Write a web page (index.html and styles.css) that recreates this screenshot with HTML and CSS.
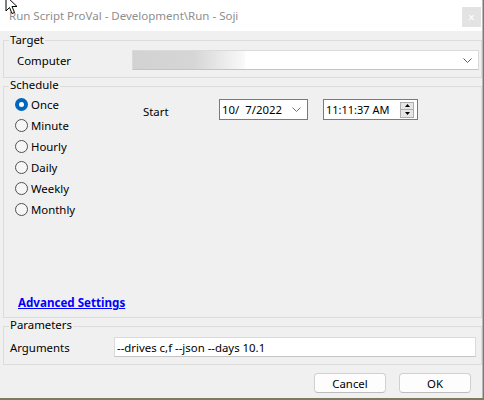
FILE: index.html
```html
<!DOCTYPE html>
<html>
<head>
<meta charset="utf-8">
<title>Run Script</title>
<link rel="stylesheet" href="styles.css">
</head>
<body>
<div class="window">
  <div class="titlebar">
    <span class="title">Run Script ProVal - Development\Run - Soji</span>
    <span class="close">×</span>
  </div>
  <div class="content">
    <fieldset class="group target">
      <legend>Target</legend>
      <div class="row">
        <span class="lbl">Computer</span>
        <div class="combo">
          <span class="redact"></span>
          <svg class="chev" width="9" height="5" viewBox="0 0 9 5"><polyline points="0.5,0.5 4.5,4.5 8.5,0.5" fill="none" stroke="#606060" stroke-width="1"/></svg>
        </div>
      </div>
    </fieldset>
    <fieldset class="group schedule">
      <legend>Schedule</legend>
      <div class="sched-body">
        <div class="sched-top">
          <div class="radios">
            <div class="radio"><span class="circle checked"></span>Once</div>
            <div class="radio"><span class="circle"></span>Minute</div>
            <div class="radio"><span class="circle"></span>Hourly</div>
            <div class="radio"><span class="circle"></span>Daily</div>
            <div class="radio"><span class="circle"></span>Weekly</div>
            <div class="radio"><span class="circle"></span>Monthly</div>
          </div>
          <div class="start">
            <span class="start-lbl">Start</span>
            <div class="date">
              <span class="val">10/  7/2022</span>
              <svg class="chev" width="9" height="5" viewBox="0 0 9 5"><polyline points="0.5,0.5 4.5,4.5 8.5,0.5" fill="none" stroke="#707070" stroke-width="1"/></svg>
            </div>
            <div class="time">
              <span class="val">11:11:37 AM</span>
              <div class="spin">
                <span class="spin-btn"><svg width="5" height="3" viewBox="0 0 5 3"><polygon points="2.5,0 5,3 0,3" fill="#000"/></svg></span>
                <span class="spin-btn"><svg width="5" height="3" viewBox="0 0 5 3"><polygon points="0,0 5,0 2.5,3" fill="#000"/></svg></span>
              </div>
            </div>
          </div>
        </div>
        <a class="adv" href="#">Advanced Settings</a>
      </div>
    </fieldset>
    <fieldset class="group params">
      <legend>Parameters</legend>
      <div class="row prow">
        <span class="lbl plbl">Arguments</span>
        <div class="textbox">--drives c,f --json --days 10.1</div>
      </div>
    </fieldset>
    <div class="buttons">
      <button class="btn">Cancel</button>
      <button class="btn">OK</button>
    </div>
  </div>
</div>
<svg class="cursor" width="13" height="20" viewBox="0 0 13 20"><path d="M1,1 L1,16 L4.5,12.5 L7,18.5 L9.5,17.5 L7,11.5 L12,11.5 Z" fill="#fff" stroke="#000" stroke-width="1" stroke-linejoin="round"/></svg>
</body>
</html>
```
FILE: styles.css
```css
html, body {
  margin: 0;
  padding: 0;
}
body {
  background: #7d7a62;
  font-family: "Noto Sans", "Open Sans", sans-serif;
  font-size: 11.4px;
  color: #000;
  position: relative;
  width: 484px;
  height: 400px;
  overflow: hidden;
}
.window {
  width: 483px;
  height: 398px;
  background: #f0f0f0;
  border-right: 1px solid #b8b8b8;
  box-sizing: border-box;
}
.titlebar {
  height: 31px;
  background: #fff;
  display: flex;
  align-items: center;
  justify-content: space-between;
  padding-left: 9px;
  padding-right: 1px;
}
.title {
  color: #8e8e8e;
  font-size: 11.5px;
}
.close {
  width: 19px;
  height: 20px;
  background: #e3e3e3;
  color: #fff;
  display: flex;
  align-items: center;
  justify-content: center;
  font-size: 12px;
  margin-top: 3px;
}
.content {
  padding: 1px 0 0 3px;
}
.group {
  margin: 0;
  padding: 0;
  border: 1px solid #dcdcdc;
  min-width: 0;
  width: 479px;
  box-sizing: border-box;
}
.group legend {
  margin-left: 5px;
  padding: 0 1px;
  line-height: 16px;
}
.schedule legend,
.params legend {
  position: relative;
  top: -1px;
}
.row {
  display: flex;
  align-items: center;
}
.target .row {
  padding: 2px 2px 7px 13px;
}
.lbl {
  width: 115px;
  flex: none;
  padding-top: 1px;
}
.combo {
  flex: 1;
  height: 20px;
  box-sizing: border-box;
  background: #fff;
  border: 1px solid #dadada;
  border-bottom-color: #c4c4c4;
  display: flex;
  align-items: center;
  justify-content: space-between;
  padding-right: 6px;
}
.redact {
  width: 112px;
  height: 18px;
  background: linear-gradient(to right, #d2d2d2 0%, #d6d6d6 55%, #fafafa 100%);
}
.schedule .sched-body {
  height: 223px;
  display: flex;
  flex-direction: column;
  padding-bottom: 6px;
  box-sizing: border-box;
}
.sched-top {
  display: flex;
}
.radios {
  width: 139px;
  padding-left: 11px;
  box-sizing: border-box;
}
.radio {
  height: 21px;
  display: flex;
  align-items: center;
}
.circle {
  width: 13px;
  height: 13px;
  box-sizing: border-box;
  border-radius: 50%;
  border: 1px solid #505050;
  background: #f6f6f6;
  margin-right: 3px;
  display: flex;
  align-items: center;
  justify-content: center;
}
.circle.checked {
  border: none;
  background: #0067c0;
}
.circle.checked::after {
  content: "";
  width: 5px;
  height: 5px;
  border-radius: 50%;
  background: #fff;
}
.start {
  display: flex;
  align-items: flex-start;
  margin-top: 5px;
}
.start-lbl {
  width: 76px;
  padding-top: 5px;
  line-height: 16px;
}
.date, .time {
  height: 21px;
  box-sizing: border-box;
  background: #fff;
  border: 1px solid #7a7a7a;
  display: flex;
  align-items: center;
  justify-content: space-between;
}
.date {
  width: 89px;
  padding: 0 6px 0 2px;
}
.date .val {
  white-space: pre;
}
.time {
  width: 95px;
  margin-left: 15px;
  padding: 0 3px 0 2px;
}
.time .val {
  font-size: 11px;
}
.spin {
  display: flex;
  flex-direction: column;
  width: 14px;
  height: 16px;
}
.spin-btn {
  flex: 1;
  border: 1px solid #adadad;
  background: #e6e6e6;
  display: flex;
  align-items: center;
  justify-content: center;
}
.spin-btn + .spin-btn {
  border-top: none;
}
.adv {
  margin-top: auto;
  margin-left: 14px;
  align-self: flex-start;
  line-height: 16px;
  color: #0000ff;
  font-size: 11.6px;
  font-weight: bold;
  text-decoration: underline;
}
.prow {
  padding: 3px 5px 7px 6px;
}
.plbl {
  width: 104px;
}
.textbox {
  flex: 1;
  height: 20px;
  box-sizing: border-box;
  background: #fff;
  border: 1px solid #dadada;
  border-bottom-color: #c4c4c4;
  padding-left: 2px;
  display: flex;
  align-items: center;
}
.buttons {
  display: flex;
  justify-content: flex-end;
  gap: 13px;
  margin-top: 8px;
  padding-right: 11px;
}
.btn {
  width: 72px;
  height: 20px;
  box-sizing: border-box;
  border: 1px solid #d0d0d0;
  border-bottom-color: #bcbcbc;
  border-radius: 4px;
  background: #fdfdfd;
  font-family: inherit;
  font-size: 11.4px;
  color: #000;
  padding: 0;
}
.cursor {
  position: absolute;
  left: 5px;
  top: -5px;
}
```
